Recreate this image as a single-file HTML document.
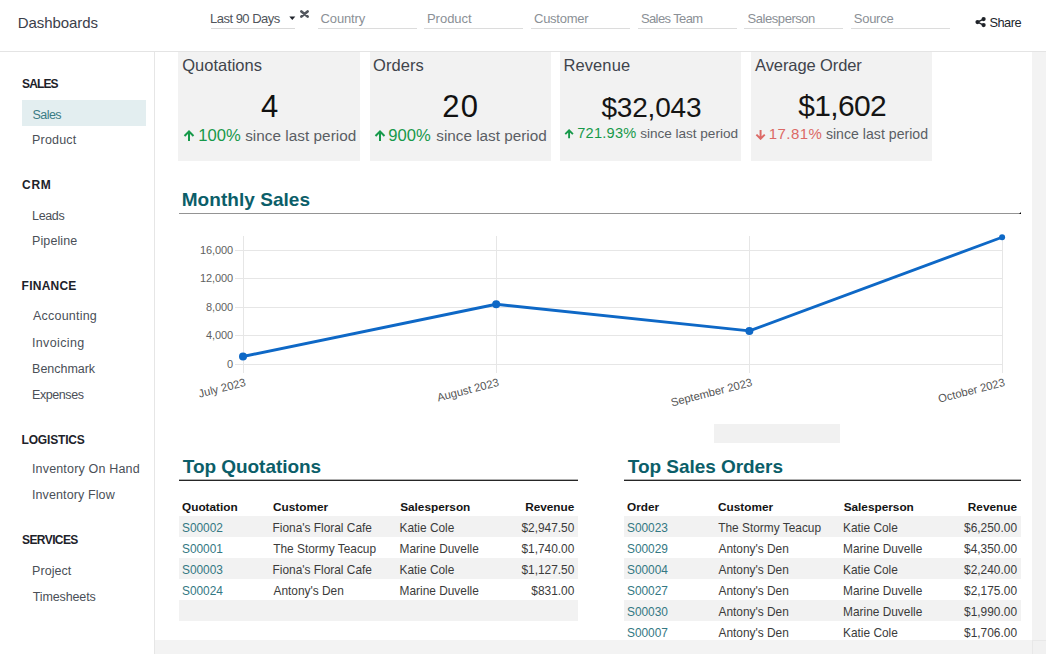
<!DOCTYPE html>
<html><head><meta charset="utf-8"><style>
html,body{margin:0;padding:0;background:#fff;}
body{width:1046px;height:654px;overflow:hidden;position:relative;font-family:"Liberation Sans",sans-serif;}
.t{position:absolute;white-space:nowrap;line-height:1;}
.r{position:absolute;}
</style></head><body>
<div class="r" style="left:0px;top:51px;width:1046px;height:1px;background:#e4e4e4;"></div>
<div class="t" style="top:15.01px;font-size:15px;color:#3b404a;letter-spacing:-0.081px;left:17.86px;">Dashboards</div>
<div class="t" style="top:12.00px;font-size:13px;color:#50555c;letter-spacing:-0.496px;left:209.93px;">Last 90 Days</div>
<div class="r" style="left:211px;top:28px;width:84px;height:1px;background:#d9d9d9;"></div>
<svg class="r" style="left:288.5px;top:15.5px" width="7" height="5"><path d="M0.3 0.4 L6.3 0.4 L3.3 4 Z" fill="#1f232b"/></svg>
<svg class="r" style="left:300px;top:10px" width="9" height="8"><path d="M1.4 1.4 L7.6 6.6 M7.6 1.4 L1.4 6.6" stroke="#53575e" stroke-width="2.6" stroke-linecap="round"/></svg>
<div class="r" style="left:318px;top:28px;width:99px;height:1px;background:#dcdcdc;"></div>
<div class="t" style="top:11.80px;font-size:13px;color:#8b9096;letter-spacing:-0.142px;left:320.55px;">Country</div>
<div class="r" style="left:424px;top:28px;width:99px;height:1px;background:#dcdcdc;"></div>
<div class="t" style="top:11.80px;font-size:13px;color:#8b9096;letter-spacing:-0.003px;left:426.93px;">Product</div>
<div class="r" style="left:531px;top:28px;width:99px;height:1px;background:#dcdcdc;"></div>
<div class="t" style="top:11.80px;font-size:13px;color:#8b9096;letter-spacing:-0.273px;left:534.05px;">Customer</div>
<div class="r" style="left:638px;top:28px;width:99px;height:1px;background:#dcdcdc;"></div>
<div class="t" style="top:11.80px;font-size:13px;color:#8b9096;letter-spacing:-0.604px;left:640.91px;">Sales Team</div>
<div class="r" style="left:744px;top:28px;width:99px;height:1px;background:#dcdcdc;"></div>
<div class="t" style="top:11.80px;font-size:13px;color:#8b9096;letter-spacing:-0.455px;left:747.62px;">Salesperson</div>
<div class="r" style="left:851px;top:28px;width:99px;height:1px;background:#dcdcdc;"></div>
<div class="t" style="top:11.80px;font-size:13px;color:#8b9096;letter-spacing:-0.268px;left:853.81px;">Source</div>
<svg class="r" style="left:975px;top:16px" width="12" height="12"><g fill="#1f2329"><circle cx="8.6" cy="3.1" r="2.1"/><circle cx="8.6" cy="9.1" r="2.1"/><circle cx="2.5" cy="6.1" r="2.1"/></g><path d="M8.6 3.1 L2.5 6.1 L8.6 9.1" stroke="#1f2329" stroke-width="1.4" fill="none"/></svg>
<div class="t" style="top:17.01px;font-size:12.8px;color:#22262c;letter-spacing:-0.506px;left:989.42px;">Share</div>
<div class="r" style="left:154px;top:52px;width:1px;height:602px;background:#e6e6e6;"></div>
<div class="r" style="left:22px;top:100px;width:124px;height:26px;background:#e3eef0;"></div>
<div class="t" style="top:78.32px;font-size:12px;color:#1d222a;font-weight:700;letter-spacing:-0.870px;left:22.04px;">SALES</div>
<div class="t" style="top:108.51px;font-size:12.5px;color:#3a7c84;letter-spacing:-0.545px;left:32.54px;">Sales</div>
<div class="t" style="top:134.21px;font-size:12.5px;color:#4a4f57;letter-spacing:0.177px;left:32.07px;">Product</div>
<div class="t" style="top:179.41px;font-size:12px;color:#1d222a;font-weight:700;letter-spacing:0.815px;left:21.92px;">CRM</div>
<div class="t" style="top:209.51px;font-size:12.5px;color:#4a4f57;letter-spacing:-0.348px;left:32.07px;">Leads</div>
<div class="t" style="top:235.30px;font-size:12.5px;color:#4a4f57;letter-spacing:0.085px;left:32.07px;">Pipeline</div>
<div class="t" style="top:279.82px;font-size:12px;color:#1d222a;font-weight:700;letter-spacing:0.242px;left:21.59px;">FINANCE</div>
<div class="t" style="top:309.80px;font-size:12.5px;color:#4a4f57;letter-spacing:0.208px;left:33.07px;">Accounting</div>
<div class="t" style="top:336.71px;font-size:12.5px;color:#4a4f57;letter-spacing:0.378px;left:31.94px;">Invoicing</div>
<div class="t" style="top:362.80px;font-size:12.5px;color:#4a4f57;letter-spacing:-0.023px;left:32.07px;">Benchmark</div>
<div class="t" style="top:388.51px;font-size:12.5px;color:#4a4f57;letter-spacing:-0.434px;left:32.07px;">Expenses</div>
<div class="t" style="top:433.91px;font-size:12px;color:#1d222a;font-weight:700;letter-spacing:-0.186px;left:21.59px;">LOGISTICS</div>
<div class="t" style="top:463.41px;font-size:12.5px;color:#4a4f57;letter-spacing:0.171px;left:31.94px;">Inventory On Hand</div>
<div class="t" style="top:489.41px;font-size:12.5px;color:#4a4f57;letter-spacing:0.111px;left:31.94px;">Inventory Flow</div>
<div class="t" style="top:533.91px;font-size:12px;color:#1d222a;font-weight:700;letter-spacing:-0.591px;left:22.04px;">SERVICES</div>
<div class="t" style="top:564.51px;font-size:12.5px;color:#4a4f57;letter-spacing:0.053px;left:32.07px;">Project</div>
<div class="t" style="top:590.60px;font-size:12.5px;color:#4a4f57;letter-spacing:-0.137px;left:32.82px;">Timesheets</div>
<div class="r" style="left:178px;top:52px;width:182px;height:109px;background:#f2f2f2;"></div>
<div class="r" style="left:370px;top:52px;width:181px;height:109px;background:#f2f2f2;"></div>
<div class="r" style="left:560px;top:52px;width:181px;height:109px;background:#f2f2f2;"></div>
<div class="r" style="left:751px;top:52px;width:181px;height:109px;background:#f2f2f2;"></div>
<div class="t" style="top:57.02px;font-size:16.5px;color:#3f444c;letter-spacing:-0.006px;left:182.22px;">Quotations</div>
<div class="t" style="top:57.02px;font-size:16.5px;color:#3f444c;letter-spacing:0.051px;left:373.02px;">Orders</div>
<div class="t" style="top:57.02px;font-size:16.5px;color:#3f444c;letter-spacing:0.104px;left:563.44px;">Revenue</div>
<div class="t" style="top:57.02px;font-size:16.5px;color:#3f444c;letter-spacing:-0.093px;left:755.06px;">Average Order</div>
<div class="t" style="top:90.90px;font-size:31px;color:#111;left:260.90px;">4</div>
<div class="t" style="top:90.90px;font-size:31px;color:#111;letter-spacing:1.303px;left:442.25px;">20</div>
<div class="t" style="top:93.91px;font-size:28px;color:#151515;letter-spacing:-0.213px;left:601.52px;">$32,043</div>
<div class="t" style="top:90.71px;font-size:30px;color:#151515;letter-spacing:-0.665px;left:798.20px;">$1,602</div>
<svg class="r" style="left:183.00px;top:130.00px" width="12.00" height="12.00" viewBox="0 0 12 12"><path d="M6 11 V1.8 M1.5 6 L6 1.5 L10.5 6" stroke="#17994a" stroke-width="2" fill="none"/></svg>
<div class="t" style="top:127.90px;font-size:16.6px;color:#17994a;letter-spacing:-0.010px;left:198.25px;">100%</div>
<div class="t" style="top:127.91px;font-size:15.3px;color:#5a5e64;letter-spacing:0.033px;left:245.18px;">since last period</div>
<svg class="r" style="left:374.00px;top:130.00px" width="12.00" height="12.00" viewBox="0 0 12 12"><path d="M6 11 V1.8 M1.5 6 L6 1.5 L10.5 6" stroke="#17994a" stroke-width="2" fill="none"/></svg>
<div class="t" style="top:127.60px;font-size:16.6px;color:#17994a;letter-spacing:0.038px;left:388.31px;">900%</div>
<div class="t" style="top:127.61px;font-size:15.3px;color:#5a5e64;letter-spacing:-0.004px;left:436.28px;">since last period</div>
<svg class="r" style="left:564.40px;top:128.50px" width="10.20" height="10.20" viewBox="0 0 12 12"><path d="M6 11 V1.8 M1.5 6 L6 1.5 L10.5 6" stroke="#17994a" stroke-width="2.2" fill="none"/></svg>
<div class="t" style="top:126.02px;font-size:14.6px;color:#17994a;letter-spacing:0.235px;left:577.27px;">721.93%</div>
<div class="t" style="top:127.00px;font-size:13.6px;color:#5a5e64;letter-spacing:-0.021px;left:640.13px;">since last period</div>
<svg class="r" style="left:754.90px;top:128.50px" width="11.16" height="11.16" viewBox="0 0 12 12"><path d="M6 1 V10.2 M1.5 6 L6 10.5 L10.5 6" stroke="#dc6965" stroke-width="2.1" fill="none"/></svg>
<div class="t" style="top:125.81px;font-size:15px;color:#dc6965;letter-spacing:0.472px;left:768.67px;">17.81%</div>
<div class="t" style="top:126.80px;font-size:14.1px;color:#5a5e64;letter-spacing:0.019px;left:825.91px;">since last period</div>
<div class="t" style="top:190.30px;font-size:19px;color:#0b5e69;font-weight:700;letter-spacing:0.043px;left:181.72px;">Monthly Sales</div>
<div class="r" style="left:179px;top:213px;width:842px;height:1px;background:#949494;"></div>
<div class="r" style="left:1020px;top:213px;width:1px;height:1px;background:#000;"></div>
<div class="r" style="left:1019px;top:213px;width:1px;height:1px;background:#555;"></div>
<div class="r" style="left:1020px;top:212px;width:1px;height:1px;background:#888;"></div>
<div class="t" style="top:358.61px;font-size:11px;color:#5f5f5f;letter-spacing:-0.120px;right:813.12px;text-align:right;">0</div>
<div class="t" style="top:330.16px;font-size:11px;color:#5f5f5f;letter-spacing:-0.120px;right:813.12px;text-align:right;">4,000</div>
<div class="t" style="top:301.71px;font-size:11px;color:#5f5f5f;letter-spacing:-0.120px;right:813.12px;text-align:right;">8,000</div>
<div class="t" style="top:273.25px;font-size:11px;color:#5f5f5f;letter-spacing:-0.120px;right:813.12px;text-align:right;">12,000</div>
<div class="t" style="top:244.80px;font-size:11px;color:#5f5f5f;letter-spacing:-0.120px;right:813.12px;text-align:right;">16,000</div>
<svg class="r" style="left:0;top:0" width="1046" height="654"><line x1="235" y1="364.5" x2="1002.5" y2="364.5" stroke="#e6e6e6" stroke-width="1"/><line x1="235" y1="335.5" x2="1002.5" y2="335.5" stroke="#e6e6e6" stroke-width="1"/><line x1="235" y1="307.5" x2="1002.5" y2="307.5" stroke="#e6e6e6" stroke-width="1"/><line x1="235" y1="278.5" x2="1002.5" y2="278.5" stroke="#e6e6e6" stroke-width="1"/><line x1="235" y1="250.5" x2="1002.5" y2="250.5" stroke="#e6e6e6" stroke-width="1"/><line x1="243.5" y1="236" x2="243.5" y2="373" stroke="#e6e6e6" stroke-width="1"/><line x1="496.5" y1="236" x2="496.5" y2="373" stroke="#e6e6e6" stroke-width="1"/><line x1="749.5" y1="236" x2="749.5" y2="373" stroke="#e6e6e6" stroke-width="1"/><line x1="1002.5" y1="236" x2="1002.5" y2="373" stroke="#e6e6e6" stroke-width="1"/><polyline points="243,356.48 496.2,304.29 749.4,330.89 1002.1,237.25" fill="none" stroke="#0e68c6" stroke-width="2.9" stroke-linejoin="round"/><circle cx="243" cy="356.48" r="4" fill="#0e68c6"/><circle cx="496.2" cy="304.29" r="4" fill="#0e68c6"/><circle cx="749.4" cy="330.89" r="4" fill="#0e68c6"/><circle cx="1002.1" cy="237.25" r="3" fill="#0e68c6"/><text x="0" y="0" transform="translate(245.7,382.9) rotate(-14.3)" text-anchor="end" dominant-baseline="middle" font-family="Liberation Sans" font-size="11.3" fill="#555">July 2023</text><text x="0" y="0" transform="translate(498.9,382.9) rotate(-14.3)" text-anchor="end" dominant-baseline="middle" font-family="Liberation Sans" font-size="11.3" fill="#555">August 2023</text><text x="0" y="0" transform="translate(752.1,382.9) rotate(-14.3)" text-anchor="end" dominant-baseline="middle" font-family="Liberation Sans" font-size="11.3" fill="#555">September 2023</text><text x="0" y="0" transform="translate(1004.8000000000001,382.9) rotate(-14.3)" text-anchor="end" dominant-baseline="middle" font-family="Liberation Sans" font-size="11.3" fill="#555">October 2023</text></svg>
<div class="r" style="left:714px;top:424px;width:126px;height:19px;background:#f1f1f1;"></div>
<div class="t" style="top:457.10px;font-size:19px;color:#0b5e69;font-weight:700;letter-spacing:-0.053px;left:182.81px;">Top Quotations</div>
<div class="r" style="left:178.5px;top:479px;width:399.0px;height:1px;background:#b0b0b0;"></div>
<div class="r" style="left:178.5px;top:480px;width:399.0px;height:1px;background:#262626;"></div>
<div class="t" style="top:502.31px;font-size:11.8px;color:#141414;font-weight:700;left:182.03px;">Quotation</div>
<div class="t" style="top:502.31px;font-size:11.8px;color:#141414;font-weight:700;left:273.03px;">Customer</div>
<div class="t" style="top:502.31px;font-size:11.8px;color:#141414;font-weight:700;left:400.15px;">Salesperson</div>
<div class="t" style="top:502.31px;font-size:11.8px;color:#141414;font-weight:700;right:471.70px;text-align:right;">Revenue</div>
<div class="r" style="left:178.5px;top:516px;width:399.0px;height:21px;background:#f2f2f2;"></div>
<div class="t" style="top:523.40px;font-size:11.9px;color:#347883;left:181.96px;">S00002</div>
<div class="t" style="top:523.40px;font-size:11.9px;color:#3b3b3b;left:272.52px;">Fiona&#39;s Floral Cafe</div>
<div class="t" style="top:523.40px;font-size:11.9px;color:#3b3b3b;left:399.52px;">Katie Cole</div>
<div class="t" style="top:523.40px;font-size:11.9px;color:#3b3b3b;right:471.70px;text-align:right;">$2,947.50</div>
<div class="t" style="top:544.40px;font-size:11.9px;color:#347883;left:181.96px;">S00001</div>
<div class="t" style="top:544.40px;font-size:11.9px;color:#3b3b3b;left:273.23px;">The Stormy Teacup</div>
<div class="t" style="top:544.40px;font-size:11.9px;color:#3b3b3b;left:399.52px;">Marine Duvelle</div>
<div class="t" style="top:544.40px;font-size:11.9px;color:#3b3b3b;right:471.70px;text-align:right;">$1,740.00</div>
<div class="r" style="left:178.5px;top:558px;width:399.0px;height:21px;background:#f2f2f2;"></div>
<div class="t" style="top:565.40px;font-size:11.9px;color:#347883;left:181.96px;">S00003</div>
<div class="t" style="top:565.40px;font-size:11.9px;color:#3b3b3b;left:272.52px;">Fiona&#39;s Floral Cafe</div>
<div class="t" style="top:565.40px;font-size:11.9px;color:#3b3b3b;left:399.52px;">Katie Cole</div>
<div class="t" style="top:565.40px;font-size:11.9px;color:#3b3b3b;right:471.70px;text-align:right;">$1,127.50</div>
<div class="t" style="top:586.40px;font-size:11.9px;color:#347883;left:181.96px;">S00024</div>
<div class="t" style="top:586.40px;font-size:11.9px;color:#3b3b3b;left:273.47px;">Antony&#39;s Den</div>
<div class="t" style="top:586.40px;font-size:11.9px;color:#3b3b3b;left:399.52px;">Marine Duvelle</div>
<div class="t" style="top:586.40px;font-size:11.9px;color:#3b3b3b;right:471.70px;text-align:right;">$831.00</div>
<div class="r" style="left:178.5px;top:600px;width:399.0px;height:21px;background:#f2f2f2;"></div>
<div class="t" style="top:457.10px;font-size:19px;color:#0b5e69;font-weight:700;letter-spacing:-0.050px;left:627.81px;">Top Sales Orders</div>
<div class="r" style="left:623.5px;top:479px;width:397.5px;height:1px;background:#b0b0b0;"></div>
<div class="r" style="left:623.5px;top:480px;width:397.5px;height:1px;background:#262626;"></div>
<div class="t" style="top:502.31px;font-size:11.8px;color:#141414;font-weight:700;left:627.03px;">Order</div>
<div class="t" style="top:502.31px;font-size:11.8px;color:#141414;font-weight:700;left:718.03px;">Customer</div>
<div class="t" style="top:502.31px;font-size:11.8px;color:#141414;font-weight:700;left:843.65px;">Salesperson</div>
<div class="t" style="top:502.31px;font-size:11.8px;color:#141414;font-weight:700;right:29.00px;text-align:right;">Revenue</div>
<div class="r" style="left:623.5px;top:516px;width:397.5px;height:21px;background:#f2f2f2;"></div>
<div class="t" style="top:523.40px;font-size:11.9px;color:#347883;left:626.96px;">S00023</div>
<div class="t" style="top:523.40px;font-size:11.9px;color:#3b3b3b;left:718.23px;">The Stormy Teacup</div>
<div class="t" style="top:523.40px;font-size:11.9px;color:#3b3b3b;left:843.02px;">Katie Cole</div>
<div class="t" style="top:523.40px;font-size:11.9px;color:#3b3b3b;right:29.00px;text-align:right;">$6,250.00</div>
<div class="t" style="top:544.40px;font-size:11.9px;color:#347883;left:626.96px;">S00029</div>
<div class="t" style="top:544.40px;font-size:11.9px;color:#3b3b3b;left:718.47px;">Antony&#39;s Den</div>
<div class="t" style="top:544.40px;font-size:11.9px;color:#3b3b3b;left:843.02px;">Marine Duvelle</div>
<div class="t" style="top:544.40px;font-size:11.9px;color:#3b3b3b;right:29.00px;text-align:right;">$4,350.00</div>
<div class="r" style="left:623.5px;top:558px;width:397.5px;height:21px;background:#f2f2f2;"></div>
<div class="t" style="top:565.40px;font-size:11.9px;color:#347883;left:626.96px;">S00004</div>
<div class="t" style="top:565.40px;font-size:11.9px;color:#3b3b3b;left:718.47px;">Antony&#39;s Den</div>
<div class="t" style="top:565.40px;font-size:11.9px;color:#3b3b3b;left:843.02px;">Katie Cole</div>
<div class="t" style="top:565.40px;font-size:11.9px;color:#3b3b3b;right:29.00px;text-align:right;">$2,240.00</div>
<div class="t" style="top:586.40px;font-size:11.9px;color:#347883;left:626.96px;">S00027</div>
<div class="t" style="top:586.40px;font-size:11.9px;color:#3b3b3b;left:718.47px;">Antony&#39;s Den</div>
<div class="t" style="top:586.40px;font-size:11.9px;color:#3b3b3b;left:843.02px;">Marine Duvelle</div>
<div class="t" style="top:586.40px;font-size:11.9px;color:#3b3b3b;right:29.00px;text-align:right;">$2,175.00</div>
<div class="r" style="left:623.5px;top:600px;width:397.5px;height:21px;background:#f2f2f2;"></div>
<div class="t" style="top:607.40px;font-size:11.9px;color:#347883;left:626.96px;">S00030</div>
<div class="t" style="top:607.40px;font-size:11.9px;color:#3b3b3b;left:718.47px;">Antony&#39;s Den</div>
<div class="t" style="top:607.40px;font-size:11.9px;color:#3b3b3b;left:843.02px;">Marine Duvelle</div>
<div class="t" style="top:607.40px;font-size:11.9px;color:#3b3b3b;right:29.00px;text-align:right;">$1,990.00</div>
<div class="t" style="top:628.40px;font-size:11.9px;color:#347883;left:626.96px;">S00007</div>
<div class="t" style="top:628.40px;font-size:11.9px;color:#3b3b3b;left:718.47px;">Antony&#39;s Den</div>
<div class="t" style="top:628.40px;font-size:11.9px;color:#3b3b3b;left:843.02px;">Katie Cole</div>
<div class="t" style="top:628.40px;font-size:11.9px;color:#3b3b3b;right:29.00px;text-align:right;">$1,706.00</div>
<div class="r" style="left:155px;top:640px;width:877px;height:14px;background:#f3f3f3;"></div>
<div class="r" style="left:1032px;top:52px;width:14px;height:602px;background:#f3f3f3;"></div>
<div class="r" style="left:1032px;top:640px;width:14px;height:14px;background:#f1f1f1;box-shadow:inset 1px 1px 0 #e8e8e8;"></div>
</body></html>
